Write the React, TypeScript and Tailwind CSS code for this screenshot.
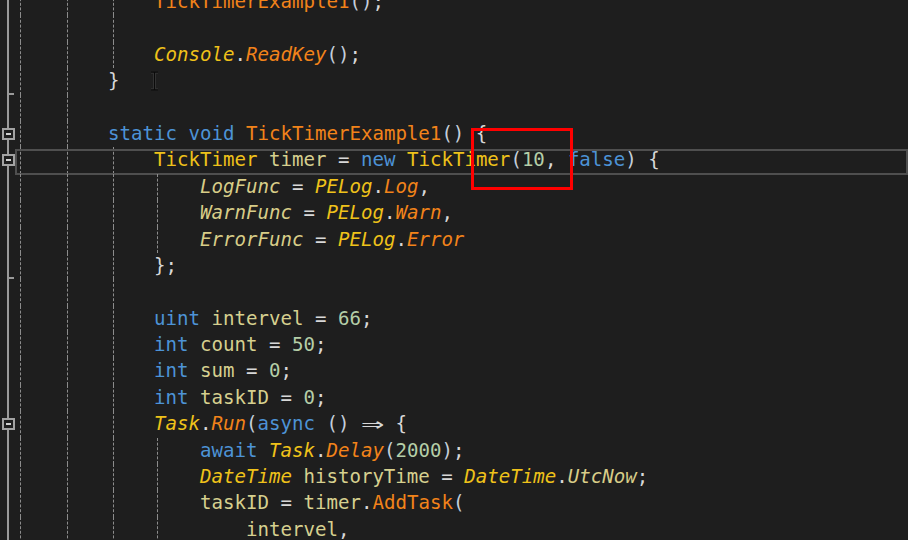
type Tok = [string, string];

const kw = "text-[#4d93d6]";
const ty = "text-[#efc21a]";
const tyi = "text-[#efc21a] italic";
const fn = "text-[#f2831a]";
const fni = "text-[#f2831a] italic";
const v = "text-[#d6d08f]";
const pr = "text-[#d8cd88] italic";
const num = "text-[#b5cea8]";
const p = "text-[#d8d8d8]";
const paren = "text-[#c4cedb]";

type Line = {
  indent: number;
  toks: Tok[];
  guides: number[];
  fold?: boolean;
  tick?: boolean;
  current?: boolean;
};

const ALL2 = [0, 1, 2];
const ALL3 = [0, 1, 2, 3];

const lines: Line[] = [
  { indent: 12, toks: [["TickTimerExample1", fn], ["()", paren], [";", p]], guides: ALL2 },
  { indent: 0, toks: [], guides: ALL2 },
  { indent: 12, toks: [["Console", tyi], [".", p], ["ReadKey", fni], ["()", paren], [";", p]], guides: ALL2 },
  { indent: 8, toks: [["}", p]], guides: [0, 1], tick: true },
  { indent: 0, toks: [], guides: [0, 1] },
  {
    indent: 8,
    toks: [["static", kw], [" ", p], ["void", kw], [" ", p], ["TickTimerExample1", fn], ["()", paren], [" {", p]],
    guides: [0, 1],
    fold: true,
  },
  {
    indent: 12,
    toks: [
      ["TickTimer", ty], [" ", p], ["timer", v], [" = ", p], ["new", kw], [" ", p], ["TickTimer", ty],
      ["(", paren], ["10", num], [", ", p], ["false", kw], [")", paren], [" {", p],
    ],
    guides: ALL2,
    fold: true,
    current: true,
  },
  { indent: 16, toks: [["LogFunc", pr], [" = ", p], ["PELog", tyi], [".", p], ["Log", fni], [",", p]], guides: ALL3 },
  { indent: 16, toks: [["WarnFunc", pr], [" = ", p], ["PELog", tyi], [".", p], ["Warn", fni], [",", p]], guides: ALL3 },
  { indent: 16, toks: [["ErrorFunc", pr], [" = ", p], ["PELog", tyi], [".", p], ["Error", fni]], guides: ALL3 },
  { indent: 12, toks: [["};", p]], guides: ALL2, tick: true },
  { indent: 0, toks: [], guides: ALL2 },
  { indent: 12, toks: [["uint", kw], [" ", p], ["intervel", v], [" = ", p], ["66", num], [";", p]], guides: ALL2 },
  { indent: 12, toks: [["int", kw], [" ", p], ["count", v], [" = ", p], ["50", num], [";", p]], guides: ALL2 },
  { indent: 12, toks: [["int", kw], [" ", p], ["sum", v], [" = ", p], ["0", num], [";", p]], guides: ALL2 },
  { indent: 12, toks: [["int", kw], [" ", p], ["taskID", v], [" = ", p], ["0", num], [";", p]], guides: ALL2 },
  {
    indent: 12,
    toks: [["Task", tyi], [".", p], ["Run", fni], ["(", paren], ["async", kw], [" ", p], ["()", paren], [" ", p], ["=>", p], [" {", p]],
    guides: ALL2,
    fold: true,
  },
  {
    indent: 16,
    toks: [["await", kw], [" ", p], ["Task", tyi], [".", p], ["Delay", fni], ["(", paren], ["2000", num], [")", paren], [";", p]],
    guides: ALL3,
  },
  {
    indent: 16,
    toks: [
      ["DateTime", tyi], [" ", p], ["historyTime", v], [" = ", p], ["DateTime", tyi], [".", p], ["UtcNow", pr], [";", p],
    ],
    guides: ALL3,
  },
  { indent: 16, toks: [["taskID", v], [" = ", p], ["timer", v], [".", p], ["AddTask", fn], ["(", paren]], guides: ALL3 },
  { indent: 20, toks: [["intervel", v], [",", p]], guides: ALL3 },
];

const guideLeft = ["left-[4px]", "left-[51px]", "left-[97px]", "left-[141px]"];

function CodeRow({ line }: { line: Line }) {
  return (
    <div className="relative flex h-[26.4px] shrink-0">
      {/* outlining margin */}
      <div className="relative w-[16px] shrink-0">
        <div className="absolute left-[7px] top-0 bottom-0 w-[2px] bg-[#9a9a9a]" />
        {line.tick && <div className="absolute left-[8px] bottom-0 w-[6px] h-[2px] bg-[#9a9a9a]" />}
        {line.fold && (
          <div className="absolute left-[2px] top-[7px] w-[13px] h-[12px] border-2 border-[#a3a3a3] bg-[#1e1e1e] flex items-center justify-center">
            <div className="w-[5px] h-[2px] bg-[#d0d0d0]" />
          </div>
        )}
      </div>

      <div className="relative flex-1 whitespace-pre">
        {line.guides.map((g) => (
          <div key={g} className={`absolute top-0 bottom-0 border-l border-dashed border-[#8c8c8c] ${guideLeft[g]}`} />
        ))}
        <span className="relative">
          {" ".repeat(line.indent)}
          {line.toks.map(([t, c], i) =>
            t === "=>" ? (
              <span key={i} className={`inline-block w-[2ch] text-center ${c}`}>
                <span className="inline-block scale-x-[2] scale-y-[1.15]">⇒</span>
              </span>
            ) : (
              <span key={i} className={c}>
                {t}
              </span>
            )
          )}
        </span>
      </div>

      {line.current && (
        <div className="pointer-events-none absolute left-[15px] right-0 top-[2px] h-[25.5px] border-2 border-[#4f4f4f]" />
      )}
    </div>
  );
}

export default function App() {
  return (
    <div className="relative w-[908px] h-[540px] overflow-hidden bg-[#1e1e1e] font-['DejaVu_Sans_Mono','Liberation_Mono',monospace] text-[19.1px] leading-[26.4px]">
      <div className="flex flex-col mt-[-11px]">
        {lines.map((l, i) => (
          <CodeRow key={i} line={l} />
        ))}
      </div>

      {/* mouse I-beam */}
      <svg className="absolute left-[149px] top-[71px]" width="11" height="20" viewBox="0 0 11 20">
        <path d="M2 1h7M5.5 1v18M2 19h7" stroke="#3a3a3a" strokeWidth="3" fill="none" />
        <path d="M2 1h7M5.5 1v18M2 19h7" stroke="#0a0a0a" strokeWidth="1.3" fill="none" />
      </svg>

      {/* annotation box */}
      <div className="absolute left-[471px] top-[128px] w-[102px] h-[62px] border-[3px] border-[#ff0000]" />
    </div>
  );
}
